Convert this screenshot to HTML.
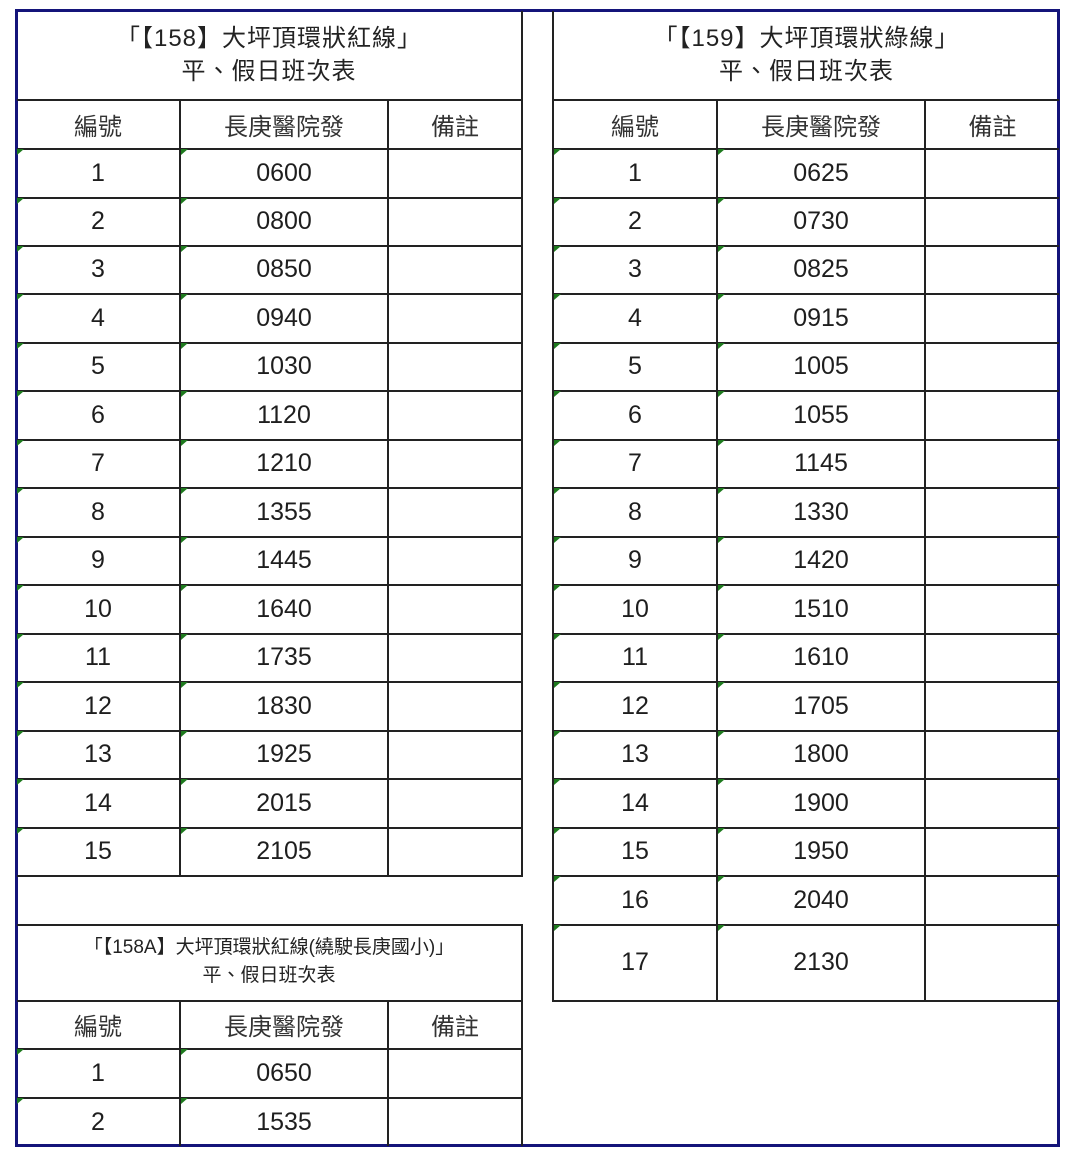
<!DOCTYPE html>
<html><head><meta charset="utf-8">
<style>
*{box-sizing:border-box;margin:0;padding:0}
body{width:1080px;height:1161px;background:#fff;position:relative;overflow:hidden;font-family:"Liberation Sans","Noto Sans CJK TC",sans-serif;color:#1e1e1e}
.frame{position:absolute;left:15px;top:9px;width:1045px;height:1138px;border:3px solid #14147a}
.t{position:absolute;border-right:2px solid #222;border-left:2px solid #222}
.r{position:absolute;left:0;right:0;display:flex;border-bottom:2px solid #222}
.r span{display:flex;align-items:center;justify-content:center;height:100%;font-size:25px;position:relative}
.r span:nth-child(1){border-right:2px solid #222}
.r span:nth-child(2){border-right:2px solid #222}
.d span:nth-child(1)::before,.d span:nth-child(2)::before{content:"";position:absolute;left:0;top:0;border-top:6px solid #1e7a1e;border-right:7px solid transparent}
.h span{font-size:24px;color:#333}
.ti{position:absolute;left:0;right:0;top:0;text-align:center;font-size:24px;line-height:33px;border-bottom:2px solid #222;color:#222;padding-top:11px;letter-spacing:1px}
.L span:nth-child(1){width:164px}.L span:nth-child(2){width:208px}.L span:nth-child(3){flex:1}
</style></head><body>
<div class="frame"></div>

<div class="t L" style="left:17px;top:11px;width:506px;height:866px;border-left:none">
<div class="ti" style="height:90px">「【158】大坪頂環狀紅線」<br>平、假日班次表</div>
<div class="r h" style="top:89px;height:50px"><span>編號</span><span>長庚醫院發</span><span>備註</span></div>
<div class="r d" style="top:138px;height:50px"><span>1</span><span>0600</span><span></span></div>
<div class="r d" style="top:187px;height:49px"><span>2</span><span>0800</span><span></span></div>
<div class="r d" style="top:235px;height:49px"><span>3</span><span>0850</span><span></span></div>
<div class="r d" style="top:283px;height:50px"><span>4</span><span>0940</span><span></span></div>
<div class="r d" style="top:332px;height:49px"><span>5</span><span>1030</span><span></span></div>
<div class="r d" style="top:380px;height:50px"><span>6</span><span>1120</span><span></span></div>
<div class="r d" style="top:429px;height:49px"><span>7</span><span>1210</span><span></span></div>
<div class="r d" style="top:477px;height:50px"><span>8</span><span>1355</span><span></span></div>
<div class="r d" style="top:526px;height:49px"><span>9</span><span>1445</span><span></span></div>
<div class="r d" style="top:574px;height:50px"><span>10</span><span>1640</span><span></span></div>
<div class="r d" style="top:623px;height:49px"><span>11</span><span>1735</span><span></span></div>
<div class="r d" style="top:671px;height:50px"><span>12</span><span>1830</span><span></span></div>
<div class="r d" style="top:720px;height:49px"><span>13</span><span>1925</span><span></span></div>
<div class="r d" style="top:768px;height:50px"><span>14</span><span>2015</span><span></span></div>
<div class="r d" style="top:817px;height:49px"><span>15</span><span>2105</span><span></span></div>
</div>

<div class="t L" style="left:17px;top:924px;width:506px;height:222px;border-left:none;border-top:2px solid #222">
<div class="ti" style="height:76px;font-size:19px;line-height:28px;padding-top:8px;letter-spacing:0">「【158A】大坪頂環狀紅線(繞駛長庚國小)」<br>平、假日班次表</div>
<div class="r h" style="top:74px;height:50px"><span>編號</span><span>長庚醫院發</span><span>備註</span></div>
<div class="r d" style="top:123px;height:50px"><span>1</span><span>0650</span><span></span></div>
<div class="r d" style="top:172px;height:48px;border-bottom:none"><span>2</span><span>1535</span><span></span></div>
</div>

<div class="t L" style="left:552px;top:11px;width:507px;height:991px;border-right:none">
<div class="ti" style="height:90px">「【159】大坪頂環狀綠線」<br>平、假日班次表</div>
<div class="r h" style="top:89px;height:50px"><span>編號</span><span>長庚醫院發</span><span>備註</span></div>
<div class="r d" style="top:138px;height:50px"><span>1</span><span>0625</span><span></span></div>
<div class="r d" style="top:187px;height:49px"><span>2</span><span>0730</span><span></span></div>
<div class="r d" style="top:235px;height:49px"><span>3</span><span>0825</span><span></span></div>
<div class="r d" style="top:283px;height:50px"><span>4</span><span>0915</span><span></span></div>
<div class="r d" style="top:332px;height:49px"><span>5</span><span>1005</span><span></span></div>
<div class="r d" style="top:380px;height:50px"><span>6</span><span>1055</span><span></span></div>
<div class="r d" style="top:429px;height:49px"><span>7</span><span>1145</span><span></span></div>
<div class="r d" style="top:477px;height:50px"><span>8</span><span>1330</span><span></span></div>
<div class="r d" style="top:526px;height:49px"><span>9</span><span>1420</span><span></span></div>
<div class="r d" style="top:574px;height:50px"><span>10</span><span>1510</span><span></span></div>
<div class="r d" style="top:623px;height:49px"><span>11</span><span>1610</span><span></span></div>
<div class="r d" style="top:671px;height:50px"><span>12</span><span>1705</span><span></span></div>
<div class="r d" style="top:720px;height:49px"><span>13</span><span>1800</span><span></span></div>
<div class="r d" style="top:768px;height:50px"><span>14</span><span>1900</span><span></span></div>
<div class="r d" style="top:817px;height:49px"><span>15</span><span>1950</span><span></span></div>
<div class="r d" style="top:865px;height:50px"><span>16</span><span>2040</span><span></span></div>
<div class="r d" style="top:914px;height:77px"><span>17</span><span>2130</span><span></span></div>
</div>
</body></html>
